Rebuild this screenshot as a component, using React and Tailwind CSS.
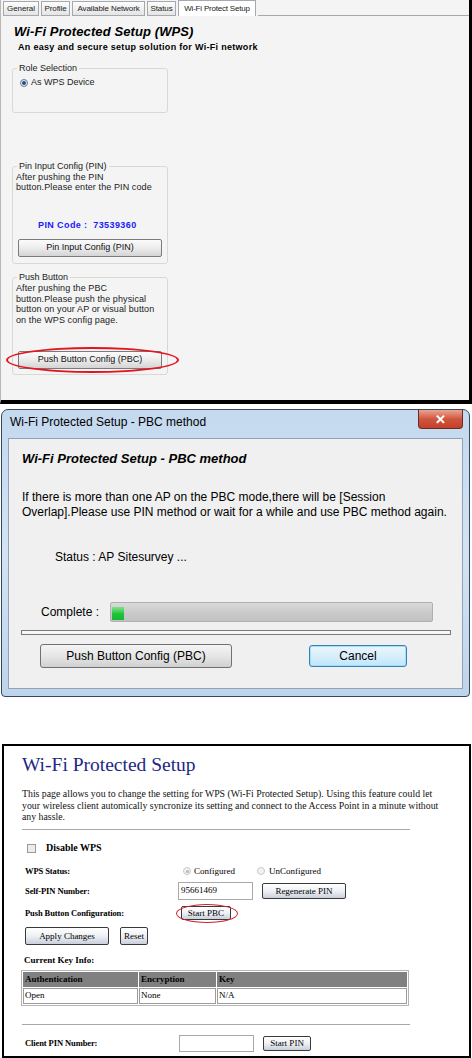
const sans = "font-['Liberation_Sans',Arial,sans-serif]";
const serif = "font-['Liberation_Serif','Times_New_Roman',serif]";

const tabs = [
  { label: "General", w: "w-[36px]" },
  { label: "Profile", w: "w-[29px]" },
  { label: "Available Network", w: "w-[73px]" },
  { label: "Status", w: "w-[29px]" },
];

function XpButton({ children, className = "" }) {
  return (
    <div
      className={`flex h-[18px] items-center justify-center rounded-[2px] border border-[#7b7b7b] bg-linear-to-b from-[#fbfbfb] via-[#ececec] to-[#d4d4d4] text-[9px] text-[#111] ${className}`}
    >
      {children}
    </div>
  );
}

function GroupBox({ legend, className = "", children }) {
  return (
    <fieldset className={`ml-[11px] w-[156px] rounded-[3px] border border-[#d9d9d4] ${className}`}>
      <legend className="ml-[4px] px-[2px] text-[9px] leading-[11px] text-[#222]">{legend}</legend>
      {children}
    </fieldset>
  );
}

function WpsPanel() {
  return (
    <div className={`relative h-[404px] w-[472px] border-b-4 border-l border-r-[3px] border-b-black border-l-[#b8b8b8] border-r-black bg-[#f4f4f4] ${sans}`}>
      <div className="flex h-[16px] items-end gap-[2px] pl-[2px]">
        {tabs.map((t) => (
          <div
            key={t.label}
            className={`flex h-[15px] items-center justify-center overflow-hidden whitespace-nowrap border border-[#a5a9ad] bg-linear-to-b from-[#fdfdfd] to-[#e4e4e4] text-[8px] tracking-[-0.1px] text-[#222] ${t.w}`}
          >
            {t.label}
          </div>
        ))}
        <div className="flex h-[16px] w-[78px] items-center justify-center overflow-hidden whitespace-nowrap border border-b-0 border-[#a5a9ad] bg-white text-[8px] tracking-[-0.2px] text-[#222]">
          Wi-Fi Protect Setup
        </div>
        <div className="h-[16px] flex-1 border-b border-[#a5a9ad]" />
      </div>

      <h1 className="ml-[13px] mt-[8px] text-[13px] font-bold italic leading-[15px] tracking-[0.1px] text-black">
        Wi-Fi Protected Setup (WPS)
      </h1>
      <p className="ml-[17px] mt-[3px] text-[9px] font-bold leading-[11px] tracking-[0.3px] text-black">
        An easy and secure setup solution for Wi-Fi network
      </p>

      <GroupBox legend="Role Selection" className="mt-[10px] h-[50px]">
        <div className="ml-[7px] mt-[3px] flex items-center gap-[3px] text-[9px] leading-[11px] text-[#222]">
          <span className="flex h-[8px] w-[8px] items-center justify-center rounded-full border border-[#5f7f9f] bg-[#e8eef4]">
            <span className="h-[4px] w-[4px] rounded-full bg-[#2c4f73]" />
          </span>
          As WPS Device
        </div>
      </GroupBox>

      <GroupBox legend="Pin Input Config (PIN)" className="mt-[48px] h-[103px]">
        <p className="ml-[3px] text-[9px] leading-[10px] tracking-[0.1px] text-[#222]">
          After pushing the PIN
          <br />
          button.Please enter the PIN code
        </p>
        <p className="ml-[25px] mt-[28px] whitespace-pre text-[9px] font-bold leading-[11px] tracking-[0.4px] text-[#1a1aff]">
          PIN Code :  73539360
        </p>
        <XpButton className="mx-[5px] mt-[8px]">Pin Input Config (PIN)</XpButton>
      </GroupBox>

      <GroupBox legend="Push Button" className="mt-[8px] h-[103px]">
        <p className="ml-[3px] text-[9px] leading-[10.7px] tracking-[0.1px] text-[#222]">
          After pushing the PBC
          <br />
          button.Please push the physical
          <br />
          button on your AP or visual button
          <br />
          on the WPS config page.
        </p>
        <XpButton className="mx-[5px] mt-[25px]">Push Button Config (PBC)</XpButton>
      </GroupBox>

      <div className="absolute left-[5px] top-[347px] h-[26px] w-[173px] rounded-[50%] border-[2.5px] border-[#e3141e]" />
    </div>
  );
}

function PbcDialog() {
  return (
    <div className="pt-[5px]">
      <div className={`ml-[1px] h-[288px] w-[469px] rounded-t-[7px] rounded-b-[4px] border border-[#35475c] bg-linear-to-b from-[#c4d9ef] via-[#d3e3f3] to-[#bed4eb] ${sans}`}>
        <div className="flex h-[28px] items-start justify-between">
          <span className="ml-[8px] mt-[5px] text-[12px] leading-[15px] text-black">
            Wi-Fi Protected Setup - PBC method
          </span>
          <div className="mr-[6px] flex h-[19px] w-[45px] items-center justify-center rounded-b-[4px] border border-t-0 border-[#6b2a22] bg-linear-to-b from-[#e9a493] via-[#d1553e] to-[#c3402a] text-[13px] font-bold leading-none text-white">
            ✕
          </div>
        </div>
        <div className="mx-[6px] h-[251px] border border-[#8fa2b8] bg-[#f0f0f0] text-black">
          <h2 className="ml-[13px] mt-[12px] text-[13px] font-bold italic leading-[16px]">
            Wi-Fi Protected Setup - PBC method
          </h2>
          <p className="ml-[13px] mt-[23px] text-[12px] leading-[15px]">
            If there is more than one AP on the PBC mode,there will be [Session
            <br />
            Overlap].Please use PIN method or wait for a while and use PBC method again.
          </p>
          <p className="ml-[46px] mt-[30px] text-[12px] leading-[15px]">Status : AP Sitesurvey ...</p>
          <div className="mt-[37px] flex h-[20px] items-center">
            <span className="ml-[32px] w-[69px] text-[12px] leading-[15px]">Complete :</span>
            <div className="flex h-[20px] w-[323px] items-stretch rounded-[2px] border border-[#b0b0b0] bg-linear-to-b from-[#dadada] via-[#cbcbcb] to-[#c2c2c2] p-[1px]">
              <div className="mt-[3px] w-[12px] bg-linear-to-b from-[#7fe08f] via-[#20c43c] to-[#17b533]" />
            </div>
          </div>
          <div className="ml-[12px] mt-[8px] h-[5px] w-[430px] border border-[#7a7a7a] bg-[#f7f7f7]" />
          <div className="mt-[9px] flex items-start">
            <div className="ml-[31px] flex h-[24px] w-[192px] items-center justify-center rounded-[3px] border border-[#707070] bg-linear-to-b from-[#f4f4f4] via-[#e6e6e6] to-[#d0d0d0] text-[12px]">
              Push Button Config (PBC)
            </div>
            <div className="ml-[77px] mt-[1px] flex h-[22px] w-[98px] items-center justify-center rounded-[3px] border border-[#3c7fb1] bg-linear-to-b from-[#eaf6fd] via-[#d9eefa] to-[#bee6fd] text-[12px] shadow-[inset_0_0_0_1px_#9ce0fb]">
              Cancel
            </div>
          </div>
        </div>
      </div>
    </div>
  );
}

function WebButton({ children, className = "" }) {
  return (
    <div
      className={`flex items-center justify-center rounded-[2px] border border-[#3a3a3a] bg-linear-to-b from-[#ffffff] via-[#eef0f4] to-[#c9cfdc] text-[9px] leading-none text-black ${className}`}
    >
      {children}
    </div>
  );
}

function Radio({ checked }) {
  return (
    <span className="flex h-[8px] w-[8px] items-center justify-center rounded-full border border-[#c8c8c8] bg-[#f2f2f2]">
      {checked && <span className="h-[3px] w-[3px] rounded-full bg-[#b5b5b5]" />}
    </span>
  );
}

function WebPage() {
  const label = "text-[8.5px] font-bold leading-[12px] tracking-[-0.1px]";
  return (
    <div className={`ml-[2px] mt-[47px] h-[314px] w-[469px] border-2 border-black bg-white text-black ${serif}`}>
      <h1 className="ml-[18px] mt-[7px] text-[19.5px] leading-[24px] text-[#1d2784]">Wi-Fi Protected Setup</h1>
      <p className="ml-[18px] mt-[11px] text-[9.8px] leading-[11.7px] text-[#111]">
        This page allows you to change the setting for WPS (Wi-Fi Protected Setup). Using this feature could let
        <br />
        your wireless client automically syncronize its setting and connect to the Access Point in a minute without
        <br />
        any hassle.
      </p>
      <div className="ml-[18px] mt-[6px] h-px w-[388px] bg-[#a8a8a8]" />

      <div className="ml-[23px] mt-[12px] flex h-[12px] items-center gap-[10px]">
        <span className="h-[9px] w-[9px] border border-[#9a9a9a] bg-[#ececec]" />
        <span className="text-[10px] font-bold leading-[12px]">Disable WPS</span>
      </div>

      <div className="ml-[21px] mt-[11px] flex h-[12px] items-center">
        <span className={`w-[158px] ${label}`}>WPS Status:</span>
        <Radio checked />
        <span className="ml-[3px] text-[9px] leading-[12px]">Configured</span>
        <span className="ml-[22px]">
          <Radio />
        </span>
        <span className="ml-[4px] text-[9px] leading-[12px]">UnConfigured</span>
      </div>

      <div className="ml-[21px] mt-[5px] flex h-[18px] items-center">
        <span className={`w-[153px] ${label}`}>Self-PIN Number:</span>
        <div className="flex h-[18px] w-[75px] items-center border border-[#a9a9a9] pl-[2px] text-[9px]">95661469</div>
        <WebButton className="ml-[9px] h-[16px] w-[84px]">Regenerate PIN</WebButton>
      </div>

      <div className="relative ml-[21px] mt-[4px] flex h-[18px] items-center">
        <span className={`w-[156px] ${label}`}>Push Button Configuration:</span>
        <WebButton className="h-[14px] w-[50px]">Start PBC</WebButton>
        <div className="absolute left-[151px] top-0 h-[19px] w-[62px] rounded-[50%] border border-[#d0202a]" />
      </div>

      <div className="ml-[21px] mt-[5px] flex h-[18px] items-center">
        <WebButton className="h-[18px] w-[84px]">Apply Changes</WebButton>
        <WebButton className="ml-[11px] h-[18px] w-[28px]">Reset</WebButton>
      </div>

      <p className="ml-[20px] mt-[9px] text-[9px] font-bold leading-[12px]">Current Key Info:</p>
      <table className="ml-[17px] mt-[4px] w-[388px] border-separate border-spacing-[1px] border border-[#b4b4b4] text-[9px]">
        <thead>
          <tr className="h-[15px] bg-[#808080] text-left">
            <th className="w-[115px] pl-[2px] font-bold">Authentication</th>
            <th className="w-[77px] pl-[2px] font-bold">Encryption</th>
            <th className="pl-[2px] font-bold">Key</th>
          </tr>
        </thead>
        <tbody>
          <tr className="h-[15px]">
            <td className="border border-[#9c9c9c] pl-[1px]">Open</td>
            <td className="border border-[#9c9c9c] pl-[1px]">None</td>
            <td className="border border-[#9c9c9c] pl-[1px]">N/A</td>
          </tr>
        </tbody>
      </table>
      <div className="ml-[18px] mt-[18px] h-px w-[388px] bg-[#a8a8a8]" />

      <div className="ml-[21px] mt-[10px] flex h-[17px] items-center">
        <span className={`w-[154px] ${label}`}>Client PIN Number:</span>
        <div className="h-[17px] w-[75px] border border-[#a9a9a9]" />
        <WebButton className="ml-[9px] h-[15px] w-[48px]">Start PIN</WebButton>
      </div>
    </div>
  );
}

export default function App() {
  return (
    <div className="h-[1058px] w-[472px] overflow-hidden bg-white">
      <WpsPanel />
      <PbcDialog />
      <WebPage />
    </div>
  );
}
